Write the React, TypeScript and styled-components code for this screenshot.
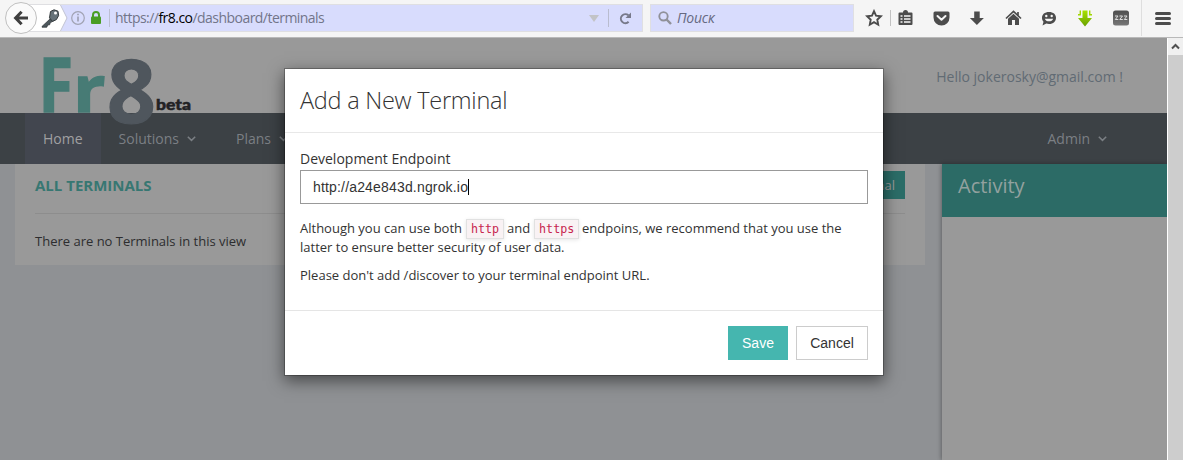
import React from 'react';
import styled, { createGlobalStyle, css } from 'styled-components';

const GlobalStyle = createGlobalStyle`
  *, *::before, *::after { box-sizing: border-box; }
  body { margin: 0; overflow: hidden; font-family: 'Open Sans', sans-serif; }
  p, h1, h2, h3 { margin: 0; }
`;

const Window = styled.div`
  width: 1183px;
  height: 460px;
  display: flex;
  flex-direction: column;
  overflow: hidden;
`;

/* ---------- browser toolbar ---------- */

const Toolbar = styled.header`
  height: 38px;
  flex: none;
  display: flex;
  align-items: flex-start;
  background: #f5f5f5;
  border-bottom: 1px solid #b9b9b9;
`;

const BackButton = styled.div`
  width: 32px;
  height: 32px;
  margin: 2px 0 0 5px;
  flex: none;
  display: grid;
  place-items: center;
  border: 1px solid #c0c0c0;
  border-radius: 50%;
  background: #fafafa;
  z-index: 1;
`;

const fieldBox = css`
  flex: none;
  height: 28px;
  margin-top: 4px;
  display: flex;
  align-items: center;
  border: 1px solid #dfdfe2;
  background: #d8dcfd;
`;

const AddressBar = styled.div`
  ${fieldBox}
  width: 621px;
  margin-left: -15px;
  border-left: 0;
`;

const Identity = styled.svg`
  flex: none;
  width: 88px;
  height: 26px;
`;

const Address = styled.div`
  flex: 1;
  font-size: 14px;
  line-height: 28px;
  letter-spacing: -0.54px;
  color: #727589;
  white-space: nowrap;
  padding-left: 5px;
  b { font-weight: 400; color: #000; }
`;

const FieldDivider = styled.i`
  width: 1px;
  height: 18px;
  background: #b9bccf;
`;

const DropArrow = styled.i`
  border: 5px solid transparent;
  border-top: 7px solid #c2c3c6;
  border-bottom: 0;
  margin-right: 9px;
`;

const ReloadIcon = styled.svg`
  margin: 0 10px 0 10px;
`;

const SearchField = styled.div`
  ${fieldBox}
  width: 204px;
  margin-left: 7px;
  padding-left: 7px;
  font-size: 14px;
  letter-spacing: -0.2px;
  line-height: 28px;
  font-style: italic;
  color: #666a82;
  svg { margin-right: 5px; }
`;

const ToolSlot = styled.div<{ $width?: number; $pad?: string }>`
  width: ${({ $width = 36 }) => $width}px;
  height: 36px;
  padding: ${({ $pad = '0' }) => $pad};
  flex: none;
  display: grid;
  place-items: center;
`;

const ToolDivider = styled.i<{ $tall?: boolean }>`
  width: 1px;
  height: ${({ $tall }) => ($tall ? 36 : 16)}px;
  margin: ${({ $tall }) => ($tall ? '0 0 0 2px' : '10px 0 0')};
  flex: none;
  background: ${({ $tall }) => ($tall ? '#dedede' : '#c2c2c2')};
`;

/* ---------- page ---------- */

const Viewport = styled.div`
  flex: 1;
  display: flex;
  min-height: 0;
`;

const Page = styled.div`
  position: relative;
  width: 1167px;
  height: 422px;
  overflow: hidden;
  display: flex;
  flex-direction: column;
  background: #8f9194;
`;

const Scrollbar = styled.div`
  flex: 1;
  border-left: 1px solid #fff;
  background: #cdcdcd;
`;

const ScrollUp = styled.div`
  height: 17px;
  display: grid;
  place-items: center;
  background: #f0f0f0;
`;

const PageHeader = styled.div`
  height: 75px;
  flex: none;
  display: flex;
  justify-content: space-between;
  background: #999;
`;

const Logo = styled.svg`
  position: relative;
  z-index: 1;
  width: 170px;
  height: 92px;
  margin-left: 30px;
  flex: none;
  overflow: visible;
  font-family: 'Open Sans', sans-serif;
  font-weight: 700;
`;

const LogoTag = styled.text`
  font-family: Lato, sans-serif;
  font-weight: 900;
  font-size: 15.5px;
  fill: #222224;
  stroke: #222224;
  stroke-width: 0.5px;
`;

const Greeting = styled.div`
  padding: 29px 44px 0 0;
  font-size: 14px;
  line-height: 20px;
  color: #616b74;
`;

const NavBar = styled.nav`
  height: 51px;
  flex: none;
  display: flex;
  padding: 0 38px 0 25px;
  background: #3c4145;
`;

const NavItem = styled.div<{ $active?: boolean; $end?: boolean }>`
  height: 51px;
  padding: 0 18px;
  display: flex;
  align-items: center;
  gap: 8px;
  font-size: 14px;
  color: ${({ $active }) => ($active ? '#a0a0a2' : '#7b7f84')};
  background: ${({ $active }) => ($active ? '#42464f' : 'transparent')};
  margin-left: ${({ $end }) => ($end ? 'auto' : '0')};
  svg { margin: 1px 4px 0 0; }
`;

const Content = styled.main`
  flex: 1;
  display: flex;
  justify-content: space-between;
  align-items: flex-start;
  padding-left: 15px;
`;

const Panel = styled.section`
  width: 910px;
  height: 101px;
  padding: 0 20px;
  background: #999;
`;

const PanelHead = styled.div`
  height: 50px;
  display: flex;
  justify-content: space-between;
  padding-top: 7px;
  border-bottom: 1px solid #8d8d8d;
`;

const PanelTitle = styled.h2`
  font-size: 15px;
  line-height: 28px;
  font-weight: 700;
  color: #377772;
`;

const SmallButton = styled.div`
  height: 28px;
  padding: 0 10px;
  font-size: 13px;
  line-height: 28px;
  color: #999;
  background: #2b6d68;
`;

const EmptyText = styled.p`
  margin-top: 17px;
  font-size: 13px;
  line-height: 20px;
  color: #2d2d2f;
`;

const ActivityPanel = styled.aside`
  width: 225px;
  height: 296px;
  background: #999;
  box-shadow: -1px 0 4px rgba(0, 0, 0, 0.3);
`;

const ActivityHead = styled.h3`
  height: 53px;
  padding: 7px 16px;
  font-size: 20px;
  line-height: 30px;
  font-weight: 400;
  color: #92a19f;
  background: #2c6b66;
`;

/* ---------- dialog ---------- */

const Dialog = styled.div`
  position: absolute;
  z-index: 2;
  left: 284px;
  top: 30px;
  width: 600px;
  border: 1px solid rgba(0, 0, 0, 0.25);
  background: #fff;
  background-clip: padding-box;
  box-shadow: 0 5px 15px rgba(0, 0, 0, 0.5);
  color: #333;
`;

const DialogHead = styled.div`
  height: 64px;
  padding: 15px;
  border-bottom: 1px solid #e8e8e8;
  font-size: 23.5px;
  line-height: 33px;
  letter-spacing: -0.25px;
  font-weight: 300;
`;

const DialogBody = styled.div`
  height: 177px;
  padding: 15px;
  font-size: 13px;
  line-height: 19px;
`;

const FieldLabel = styled.label`
  display: block;
  font-size: 14px;
  line-height: 22px;
`;

const FieldInput = styled.div`
  height: 34px;
  display: flex;
  align-items: center;
  padding-left: 12px;
  border: 1px solid #999;
  font: 14px 'Liberation Sans', sans-serif;
  letter-spacing: 0.17px;
  color: #333;
`;

const Caret = styled.i`
  width: 1px;
  height: 16px;
  background: #000;
`;

const Note = styled.p`
  margin-top: 9px;
  &:first-of-type { margin-top: 15px; }
`;

const Code = styled.code`
  margin: 0 -0.6px 0 0.6px;
  padding: 2px 4px;
  border: 1px solid #e1e1e1;
  background: #f9f2f4;
  color: #c7254e;
  font: 11.7px 'DejaVu Sans Mono', monospace;
  box-shadow: 0 1px 4px rgba(0, 0, 0, 0.1);
`;

const DialogFoot = styled.div`
  height: 65px;
  padding: 15px;
  display: flex;
  justify-content: flex-end;
  gap: 8px;
  border-top: 1px solid #e5e5e5;
`;

const Button = styled.button<{ $primary?: boolean }>`
  height: 34px;
  width: ${({ $primary }) => ($primary ? 60 : 72)}px;
  padding: 0;
  font: 14px 'Liberation Sans', sans-serif;
  color: ${({ $primary }) => ($primary ? '#fff' : '#333')};
  background: ${({ $primary }) => ($primary ? '#45b6af' : '#fff')};
  border: 1px solid ${({ $primary }) => ($primary ? '#45b6af' : '#ccc')};
`;

const Chevron = () => (
  <svg width="9" height="6" viewBox="0 0 9 6" fill="none" stroke="currentColor" strokeWidth="1.5">
    <path d="M.8 .8 4.500 4.400 8.200 .8" />
  </svg>
);

const dark = '#4c4c4c';

export default function App() {
  return (
    <Window>
      <GlobalStyle />
      <Toolbar>
        <BackButton>
          <svg width="16" height="16" viewBox="0 0 16 16" fill="none" stroke="#3f3f3f" strokeWidth="3">
            <path d="M8.600 1.800 2.600 8l6 6.200M3 8h12" />
          </svg>
        </BackButton>
        <AddressBar>
          <Identity viewBox="0 0 88 26">
            <path d="M0 0h39l6 13-6 13H0z" fill="#fff" />
            <path d="M38.500 0l6.500 13-6.500 13" fill="none" stroke="#bfc1d2" />
            <path d="M20 21.500 29 13l2.800 2.600-3.600 2.200-.6 2-2 .2-.8 2.200H20z" fill="#4e585d" stroke="#34393c" strokeWidth=".8" />
            <path d="M28.500 6.500 32 4.800l4 1.400.6 4.400-2.200 4-3.900 1.800-3-3.500z" fill="#667279" stroke="#32383b" />
            <circle cx="33.500" cy="8" r="1.500" fill="#fff" />
            <circle cx="56" cy="13" r="6.300" fill="none" stroke="#a1a3b3" strokeWidth="1.200" />
            <path d="M56 11.500v5M56 8.800v1.500" stroke="#9799aa" strokeWidth="1.500" />
            <path d="M71 12v-2a3 3 0 0 1 6 0v2" fill="none" stroke="#4a9e25" strokeWidth="2" />
            <rect x="69" y="11.500" width="10" height="7.500" rx="1" fill="#4a9e25" />
            <path d="M87.500 4v18" stroke="#bcbfd3" />
          </Identity>
          <Address>https://<b>fr8.co</b>/dashboard/terminals</Address>
          <DropArrow />
          <FieldDivider />
          <ReloadIcon width="13" height="13" viewBox="0 0 13 13">
            <path d="M9.600 9.800A4.500 4.500 0 1 1 9.400 3.300" fill="none" stroke="#77798a" strokeWidth="2" />
            <path d="M12 .5V6H6.500z" fill="#77798a" />
          </ReloadIcon>
        </AddressBar>
        <SearchField>
          <svg width="14" height="14" viewBox="0 0 14 14" fill="none" stroke="#909199">
            <circle cx="5.500" cy="5.300" r="4.200" strokeWidth="1.900" />
            <path d="M8.600 8.500 13 13" strokeWidth="2.500" />
          </svg>
          Поиск
        </SearchField>
        <ToolSlot $width={36} $pad="0 0 0 4px">
          <svg width="18" height="18" viewBox="0 0 18 18">
            <path d="m9 2.200 2 4.500 4.900.6-3.600 3.400.9 5L9 13.200l-4.200 2.500.9-5-3.600-3.400 4.900-.6z" fill="none" stroke={dark} strokeWidth="1.900" />
          </svg>
        </ToolSlot>
        <ToolDivider />
        <ToolSlot $width={32} $pad="0 3px 0 0">
          <svg width="15" height="16" viewBox="0 0 15 16">
            <path d="M5 2.500a2.500 2.500 0 0 1 5 0h3.500a1 1 0 0 1 1 1V14a1 1 0 0 1-1 1h-12a1 1 0 0 1-1-1V3.500a1 1 0 0 1 1-1z" fill={dark} />
            <path d="M2.500 6h2M6 6h6.500M2.500 9h2M6 9h6.500M2.500 12h2M6 12h6.500" stroke="#f5f5f5" strokeWidth="1.500" />
          </svg>
        </ToolSlot>
        <ToolSlot>
          <svg width="17" height="15" viewBox="0 0 17 15">
            <path d="M2 .5h13A1.500 1.500 0 0 1 16.500 2v4.500a8 8 0 0 1-16 0V2A1.500 1.500 0 0 1 2 .5z" fill={dark} />
            <path d="m4.500 5 4 3.800 4-3.800" fill="none" stroke="#f5f5f5" strokeWidth="2" strokeLinecap="round" strokeLinejoin="round" />
          </svg>
        </ToolSlot>
        <ToolSlot>
          <svg width="16" height="16" viewBox="0 0 16 16"><path d="M5.200 1.500h5.500V8h4.200l-7 7-7-7h4.300z" fill={dark} /></svg>
        </ToolSlot>
        <ToolSlot>
          <svg width="17" height="16" viewBox="0 0 17 16">
            <path d="m1 8.500 7.500-7 7.500 7M13 2v4" fill="none" stroke={dark} strokeWidth="1.700" />
            <path d="m3 8.800 5.500-5 5.500 5V15h-4v-5H7v5H3z" fill={dark} />
          </svg>
        </ToolSlot>
        <ToolSlot>
          <svg width="16" height="15" viewBox="0 0 16 15">
            <path d="M8 1c4.300 0 7 2.400 7 5.700S12.300 13 8 13c-1 0-1.900-.2-2.700-.4L1.500 14.500l1-3.700C1.600 9.800 1 8.300 1 6.700 1 3.400 3.700 1 8 1z" fill={dark} />
            <circle cx="5.300" cy="5" r="1.200" fill="#f5f5f5" /><circle cx="10.700" cy="5" r="1.200" fill="#f5f5f5" />
            <path d="M3.800 7.800h8.400c-.8 3.400-7.600 3.400-8.400 0z" fill="#f5f5f5" />
          </svg>
        </ToolSlot>
        <ToolSlot>
          <svg width="16" height="17" viewBox="0 0 16 17">
            <defs>
              <linearGradient id="lime" x2="0" y2="1"><stop stopColor="#a8e200" /><stop offset="1" stopColor="#68a000" /></linearGradient>
            </defs>
            <path d="M5.500.5h5V8H15l-7 8.500L1 8h4.500z" fill="url(#lime)" />
            <path d="M1 4.700h2.800M3.300.5v4.200M12.700.5v4.200H15" fill="none" stroke="#a0d800" strokeWidth="1.400" />
          </svg>
        </ToolSlot>
        <ToolSlot>
          <svg width="16" height="16" viewBox="0 0 16 16">
            <defs>
              <linearGradient id="tile" x2="0" y2="1"><stop stopColor="#4e4e4e" /><stop offset="1" stopColor="#777" /></linearGradient>
            </defs>
            <rect width="16" height="15" y=".5" rx="2.500" fill="url(#tile)" />
            <path d="M2 6h3L2.300 9.500h3M6.500 6h3L6.800 9.500h3M11 6h3l-2.700 3.500h3" fill="none" stroke="#ddd" strokeWidth="1" />
          </svg>
        </ToolSlot>
        <ToolDivider $tall />
        <ToolSlot $width={41}>
          <svg width="16" height="13" viewBox="0 0 16 13" stroke={dark} strokeWidth="3" strokeLinecap="round">
            <path d="M1.500 1.500h13M1.500 6.500h13M1.500 11.500h13" />
          </svg>
        </ToolSlot>
      </Toolbar>

      <Viewport>
        <Page>
          <PageHeader>
            <Logo viewBox="0 0 170 92">
              <g fill="#477b75" stroke="#477b75">
                <text transform="translate(8.600 74.300) scale(.84 1)" fontSize="75" strokeWidth="1.500">F</text>
                <text transform="translate(43.300 74.300) scale(1.090 1)" fontSize="65" strokeWidth="1.500">r</text>
              </g>
              <text transform="translate(77 85.200) scale(.97 1)" fontSize="88" fill="#4f565d" stroke="#4f565d" strokeWidth="1.200">8</text>
              <LogoTag x="126" y="71.800" textLength="35" lengthAdjust="spacingAndGlyphs">beta</LogoTag>
            </Logo>
            <Greeting>Hello jokerosky@gmail.com !</Greeting>
          </PageHeader>
          <NavBar>
            <NavItem $active>Home</NavItem>
            <NavItem>Solutions <Chevron /></NavItem>
            <NavItem>Plans <Chevron /></NavItem>
            <NavItem $end>Admin <Chevron /></NavItem>
          </NavBar>
          <Content>
            <Panel>
              <PanelHead>
                <PanelTitle>ALL TERMINALS</PanelTitle>
                <SmallButton>Add Terminal</SmallButton>
              </PanelHead>
              <EmptyText>There are no Terminals in this view</EmptyText>
            </Panel>
            <ActivityPanel>
              <ActivityHead>Activity</ActivityHead>
            </ActivityPanel>
          </Content>
          <Dialog>
            <DialogHead>Add a New Terminal</DialogHead>
            <DialogBody>
              <FieldLabel>Development Endpoint</FieldLabel>
              <FieldInput>http://a24e843d.ngrok.io<Caret /></FieldInput>
              <Note>
                Although you can use both <Code>http</Code> and <Code>https</Code> endpoins, we recommend that you use the
                latter to ensure better security of user data.
              </Note>
              <Note>Please don't add /discover to your terminal endpoint URL.</Note>
            </DialogBody>
            <DialogFoot>
              <Button $primary>Save</Button>
              <Button>Cancel</Button>
            </DialogFoot>
          </Dialog>
        </Page>
        <Scrollbar>
          <ScrollUp>
            <svg width="9" height="7" viewBox="0 0 9 7" fill="none" stroke="#505050" strokeWidth="2"><path d="m1 5.500 3.500-3.500L8 5.500" /></svg>
          </ScrollUp>
        </Scrollbar>
      </Viewport>
    </Window>
  );
}
